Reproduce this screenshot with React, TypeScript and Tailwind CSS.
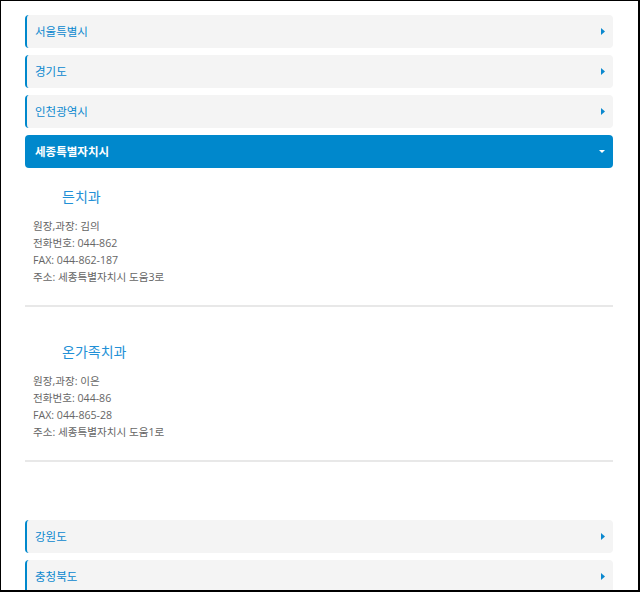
import React from "react";

const FONT = { fontFamily: '"Open Sans", "Noto Sans CJK KR", sans-serif' };

function Row({ label }: { label: string }) {
  return (
    <div className="flex h-[33px] items-center justify-between rounded-[4px] border-l-2 border-[#0088cc] bg-[#f4f4f4] pl-[8px] pr-[8px]">
      <span className="text-[11.5px] text-[#0a88cf]">{label}</span>
      <svg width="4" height="7" viewBox="0 0 4 7" className="block">
        <path d="M0 0 L4 3.5 L0 7 Z" fill="#0a88cf" />
      </svg>
    </div>
  );
}

function Entry({
  title,
  lines,
  top,
}: {
  title: string;
  lines: string[];
  top: string;
}) {
  return (
    <div className={`${top} border-b-2 border-[#e8e8e8] pb-[19px]`}>
      <div className="h-[20px] pl-[37px] text-[14px] leading-[20px] text-[#2290d6]">{title}</div>
      <div className="mt-[11px] pl-[8px] text-[10.6px] leading-[17px] text-[#666666]">
        {lines.map((l, i) => (
          <div key={i}>{l}</div>
        ))}
      </div>
    </div>
  );
}

export default function App() {
  return (
    <div
      className="h-[592px] w-[640px] overflow-hidden border-b-2 border-l border-r-2 border-t border-black bg-white"
      style={FONT}
    >
      <div className="ml-[24px] mt-[14px] flex w-[588px] flex-col gap-[7px]">
        <Row label="서울특별시" />
        <Row label="경기도" />
        <Row label="인천광역시" />
        <div>
          <div className="flex h-[33px] items-center justify-between rounded-[4px] bg-[#0088cc] pl-[10px] pr-[8px]">
            <span className="text-[11.5px] font-bold text-white">세종특별자치시</span>
            <svg width="6" height="3" viewBox="0 0 6 3" className="block">
              <path d="M0 0 L6 0 L3 3 Z" fill="#ffffff" />
            </svg>
          </div>
          <div className="pb-[51px]">
            <Entry
              top="pt-[19px]"
              title="든치과"
              lines={[
                "원장,과장: 김의",
                "전화번호: 044-862",
                "FAX: 044-862-187",
                "주소: 세종특별자치시 도움3로",
              ]}
            />
            <Entry
              top="pt-[35px]"
              title="온가족치과"
              lines={[
                "원장,과장: 이은",
                "전화번호: 044-86",
                "FAX: 044-865-28",
                "주소: 세종특별자치시 도움1로",
              ]}
            />
          </div>
        </div>
        <Row label="강원도" />
        <Row label="충청북도" />
      </div>
    </div>
  );
}
